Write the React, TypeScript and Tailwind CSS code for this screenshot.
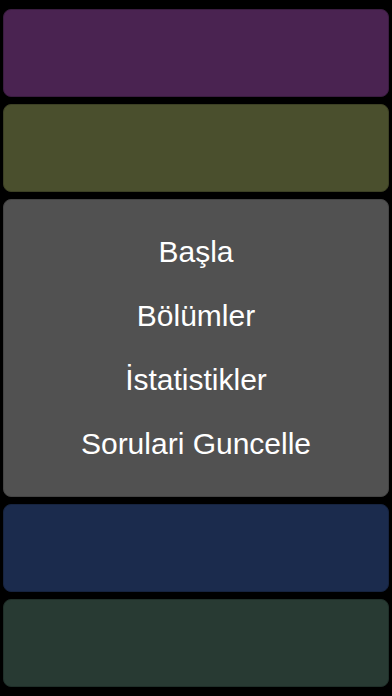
import React from "react";

export default function App() {
  const items = ["Başla", "Bölümler", "İstatistikler", "Sorulari Guncelle"];
  return (
    <div
      className="w-[392px] h-[696px] bg-black flex flex-col gap-[7px] px-[3px] py-[9px] overflow-hidden"
      style={{ fontFamily: '"Liberation Sans", Arial, sans-serif' }}
    >
      <div className="h-[88px] shrink-0 rounded-[8px] bg-[#4a2351] border border-[#3a1c40]" />
      <div className="h-[88px] shrink-0 rounded-[8px] bg-[#4a4f2d] border border-[#3c4024]" />
      <div className="h-[298px] shrink-0 rounded-[8px] bg-[#515151] border border-[#444] flex flex-col items-center justify-center">
        {items.map((t) => (
          <div key={t} className="text-white text-[30px] leading-[64px]">
            {t}
          </div>
        ))}
      </div>
      <div className="h-[88px] shrink-0 rounded-[8px] bg-[#1b2b4d] border border-[#16233f]" />
      <div className="h-[88px] shrink-0 rounded-[8px] bg-[#283a33] border border-[#1f2f29]" />
    </div>
  );
}
